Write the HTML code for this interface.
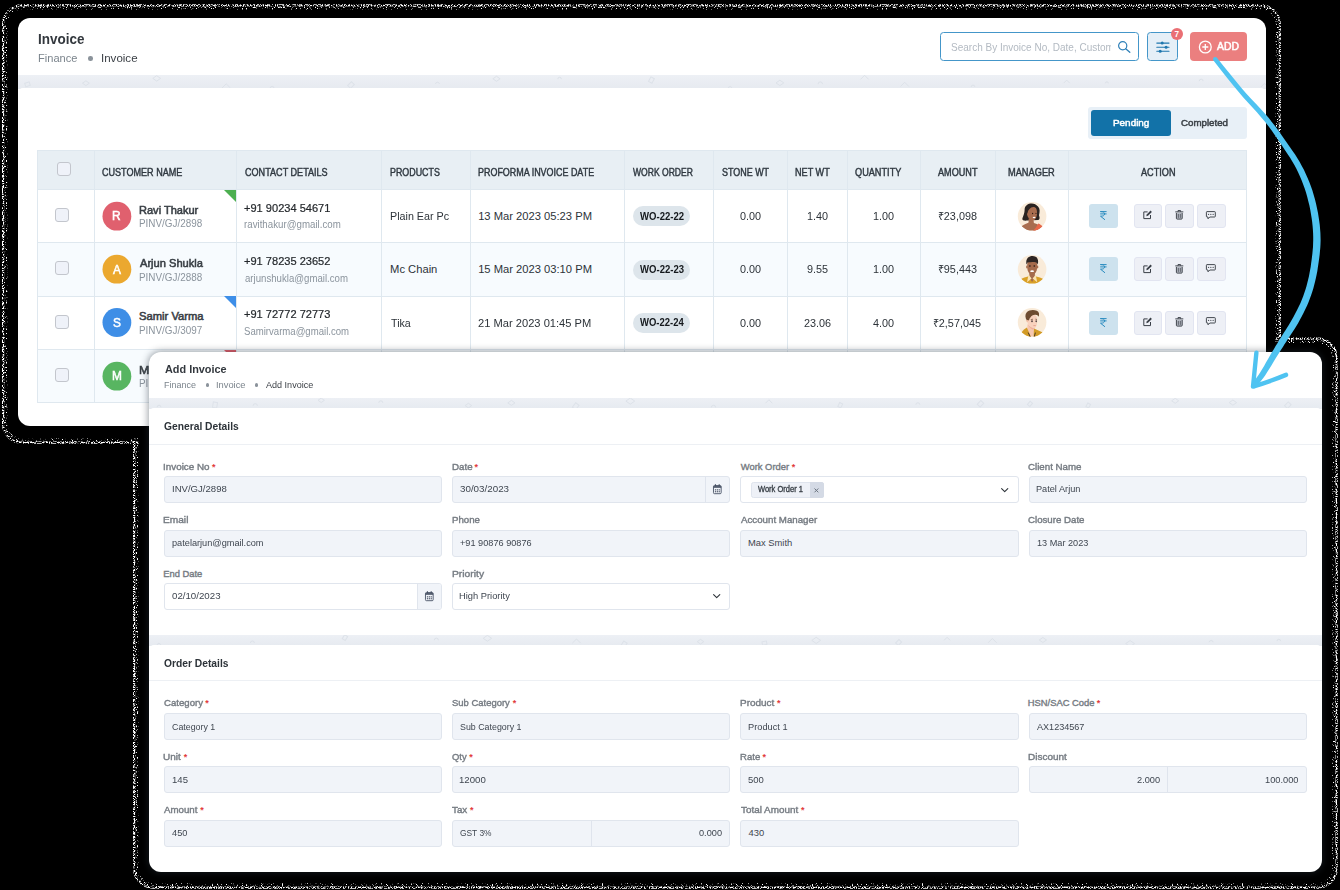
<!DOCTYPE html>
<html>
<head>
<meta charset="utf-8">
<title>Invoice</title>
<style>
*{box-sizing:border-box;margin:0;padding:0}
html,body{width:1340px;height:890px;overflow:hidden;background:#000}
body{position:relative;font-family:"Liberation Sans",sans-serif;color:#2d3339}
.abs{position:absolute}
.t{position:absolute;white-space:nowrap;line-height:1;transform-origin:0 0}
svg{position:absolute;overflow:visible}
#card1{position:absolute;left:18px;top:18px;width:1248px;height:408px;background:#fff;border-radius:12px}
#card2{position:absolute;left:149px;top:352px;width:1173px;height:520px;background:#fff;border-radius:12px;box-shadow:0 0 7px 1px rgba(40,50,60,.45)}
.strip{position:absolute;background:linear-gradient(#edf0f5,#e6eaf0);overflow:hidden}
.hl{position:absolute;left:37px;width:1210px;height:1px;background:#dfe8ef}
.vl{position:absolute;top:150px;width:1px;height:253px;background:#dfe8ef}
.cb{position:absolute;width:14px;height:14px;border:1px solid #c3c6cd;border-radius:3px;background:#eff2f9}
.av{position:absolute;width:29px;height:29px;border-radius:50%}
.wo{position:absolute;left:633px;width:57px;height:20px;border-radius:10px;background:#dde5eb}
.rb{position:absolute;left:1089px;width:29px;height:24px;border-radius:3px;background:#cde2ee}
.ab{position:absolute;width:29px;height:24px;border-radius:3px;background:#eef0f6;border:1px solid #e2e5f1}
.in{position:absolute;width:278px;height:27px;border:1px solid #e0e5ed;border-radius:3px;background:#f1f4f9}
.in.w{background:#fff}
.sep{position:absolute;width:1px;height:25px;background:#dfe4ed}
</style>
</head>
<body>
<svg style="left:0;top:0" width="1340" height="890" viewBox="0 0 1340 890"><defs><filter id="dz" x="0" y="0" width="100%" height="100%" filterUnits="userSpaceOnUse"><feTurbulence type="fractalNoise" baseFrequency="0.85" numOctaves="1" seed="7" result="n"/><feColorMatrix in="n" type="matrix" values="0 0 0 0 1  0 0 0 0 1  0 0 0 0 1  0 0 0 9 -4.05" result="m"/><feComposite in="m" in2="SourceGraphic" operator="in"/></filter><filter id="dz2" x="0" y="0" width="100%" height="100%" filterUnits="userSpaceOnUse"><feTurbulence type="fractalNoise" baseFrequency="0.8" numOctaves="1" seed="3" result="n"/><feColorMatrix in="n" type="matrix" values="0 0 0 0 1  0 0 0 0 1  0 0 0 0 1  0 0 0 9 -5.35" result="m"/><feComposite in="m" in2="SourceGraphic" operator="in"/></filter></defs><g filter="url(#dz)" fill="none" stroke="#fff" stroke-width="2.2"><rect x="3.1" y="5.3" width="1276.7" height="437.4" rx="19" ry="19" /><rect x="134.1" y="338.7" width="1202.5" height="548.9" rx="19" ry="19" /></g><g filter="url(#dz2)" fill="none" stroke="#fff" stroke-width="3.4"><rect x="5.7" y="7.9" width="1271.5" height="432.2" rx="17" ry="17" /><rect x="136.7" y="341.3" width="1197.3" height="543.7" rx="17" ry="17" /></g><rect x="7.7" y="9.9" width="1267.5" height="428.2" rx="15" ry="15" fill="#000"/><rect x="138.7" y="343.3" width="1193.3" height="539.7" rx="15" ry="15" fill="#000"/></svg><div id="card1"></div>
<div class="t" style="left:37.66px;top:33px;font-size:13.8px;color:#33383e;font-weight:bold;transform:scaleX(0.9753);">Invoice</div>
<div class="t" style="left:37.59px;top:53px;font-size:11px;color:#7b848c;transform:scaleX(1.0062);">Finance</div>
<div class="abs" style="left:88.2px;top:56.2px;width:4.5px;height:4.5px;border-radius:50%;background:#8b939b"></div>
<div class="t" style="left:100.55px;top:53px;font-size:11px;color:#3a3f45;transform:scaleX(1.0484);">Invoice</div>
<div class="strip" style="left:18px;top:75px;width:1248px;height:14px"><svg width="1248" height="14" style="left:0;top:0" fill="none" stroke="#dde2e9" stroke-width="1"><rect x="8.2" y="7.3" width="3.6" height="4.7" transform="rotate(70 10.0 9.1)"/><path d="M67.9 5.8l3.4 2.4l-3.4 2.4l-3.4 -2.4z"/><path d="M138.7 0.7l3.9 2.7l-3.9 2.7l-3.9 -2.7z"/><path d="M203.8 13.2l4.4 -4.4l4.4 4.4"/><path d="M252.1 13.4a2.0 2.0 0 0 1 4.0 0"/><rect x="331.4" y="7.6" width="4.1" height="5.3" transform="rotate(45 333.5 9.6)"/><path d="M417.4 8.9a2.1 2.1 0 0 1 4.1 0"/><path d="M478.5 1.3l3.6 2.5l-3.6 2.5l-3.6 -2.5z"/><path d="M539.8 4.1a1.8 1.8 0 0 1 3.6 0"/><rect x="631.8" y="2.6" width="3.9" height="5.1" transform="rotate(29 633.7 4.5)"/><path d="M710.3 13.3a1.7 1.7 0 0 1 3.5 0"/><path d="M761.9 5.2l3.9 2.7l-3.9 2.7l-3.9 -2.7z"/><path d="M800.1 9.1a2.2 2.2 0 0 1 4.4 0"/><path d="M842.5 4.4l4.1 -4.1l4.1 4.1"/><path d="M882.5 11.5l4.2 -4.2l4.2 4.2"/><path d="M953.2 11.9a1.8 1.8 0 0 1 3.6 0"/><path d="M1045.7 8.1l3.0 -3.0l3.0 3.0"/><path d="M1087.4 8.3a1.5 1.5 0 0 1 3.0 0"/><path d="M1181.3 6.1a1.9 1.9 0 0 1 3.8 0"/><path d="M1242.9 12.0l3.6 -3.6l3.6 3.6"/></svg></div>
<div class="abs" style="left:18px;top:69px;width:1248px;height:6px;background:#fff;border-radius:0 0 5px 5px"></div>
<div class="abs" style="left:18px;top:88px;width:1248px;height:8px;background:#fff;border-radius:5px 5px 0 0"></div>
<div class="abs" style="left:940px;top:32px;width:199px;height:29px;border:1px solid #4496c9;border-radius:3.5px;background:#fff"></div>
<div class="abs" style="left:0;top:30px;width:1111.4px;height:32px;overflow:hidden"><div class="t" style="left:950.77px;top:12px;font-size:10.5px;color:#b3bac2;transform:scaleX(0.9530);">Search By Invoice No, Date, Customer</div></div>
<svg style="left:1116px;top:39px" width="16" height="16" viewBox="0 0 16 16"><circle cx="6.7" cy="6.7" r="4.1" fill="none" stroke="#2f80b8" stroke-width="1.2"/><path d="M9.7 9.7L13.8 13.3" stroke="#2f80b8" stroke-width="1.3" stroke-linecap="round"/></svg>
<div class="abs" style="left:1147px;top:32px;width:31px;height:29px;border:1px solid #4496c9;border-radius:3.5px;background:#e5eff7"></div>
<svg style="left:1156px;top:40px" width="14" height="14" viewBox="0 0 14 14"><g stroke="#1f77ae" stroke-width="1.1" stroke-linecap="round"><path d="M0.8 3.1H13M0.8 7.2H13M0.8 11.3H13"/></g><g fill="#1f77ae"><circle cx="6.2" cy="3.1" r="1.5"/><circle cx="10.1" cy="7.2" r="1.5"/><circle cx="4.2" cy="11.3" r="1.5"/></g></svg>
<div class="abs" style="left:1170.6px;top:27.8px;width:12.6px;height:12.6px;border-radius:50%;background:#ea6f74"></div>
<div class="t" style="left:1174.62px;top:31px;font-size:8.2px;color:#fff;font-weight:bold;">7</div>
<div class="abs" style="left:1190px;top:32px;width:57px;height:29px;border-radius:4px;background:#eb7f7f"></div>
<svg style="left:1198px;top:40px" width="14" height="14" viewBox="0 0 14 14"><circle cx="7.3" cy="7" r="5.9" fill="none" stroke="#fff" stroke-width="1.3"/><path d="M7.3 4V10M4.3 7H10.3" stroke="#fff" stroke-width="1.3"/></svg>
<div class="t" style="left:1217.20px;top:42px;font-size:10.2px;color:#fff;-webkit-text-stroke:0.51px #fff;transform:scaleX(1.0204);">ADD</div>
<div class="abs" style="left:1088px;top:107px;width:159px;height:32px;border-radius:3px;background:#e8f0f7"></div>
<div class="abs" style="left:1091px;top:110px;width:80px;height:26px;border-radius:3px;background:#1272a8"></div>
<div class="t" style="left:1113.13px;top:118px;font-size:9.6px;color:#fff;-webkit-text-stroke:0.48px #fff;transform:scaleX(1.0327);">Pending</div>
<div class="t" style="left:1180.94px;top:118px;font-size:9.6px;color:#3a4046;-webkit-text-stroke:0.48px #3a4046;transform:scaleX(1.0135);">Completed</div>
<div class="abs" style="left:37px;top:150px;width:1210px;height:39px;background:#e8eff4"></div>
<div class="abs" style="left:37px;top:243px;width:1210px;height:53px;background:#f7fbfe"></div>
<div class="abs" style="left:37px;top:350px;width:1210px;height:52px;background:#f7fbfe"></div>
<div class="hl" style="top:150px"></div>
<div class="hl" style="top:189px"></div>
<div class="hl" style="top:242px"></div>
<div class="hl" style="top:296px"></div>
<div class="hl" style="top:349px"></div>
<div class="hl" style="top:402px"></div>
<div class="vl" style="left:37px"></div>
<div class="vl" style="left:94px"></div>
<div class="vl" style="left:236px"></div>
<div class="vl" style="left:381px"></div>
<div class="vl" style="left:470px"></div>
<div class="vl" style="left:624px"></div>
<div class="vl" style="left:713px"></div>
<div class="vl" style="left:787px"></div>
<div class="vl" style="left:847px"></div>
<div class="vl" style="left:920px"></div>
<div class="vl" style="left:995px"></div>
<div class="vl" style="left:1068px"></div>
<div class="vl" style="left:1246px"></div>
<div class="cb" style="left:57px;top:162px"></div>
<div class="t" style="left:102.05px;top:168px;font-size:10px;color:#2f3840;-webkit-text-stroke:0.42px #2f3840;transform:scaleX(0.9056);">CUSTOMER NAME</div>
<div class="t" style="left:244.55px;top:168px;font-size:10px;color:#2f3840;-webkit-text-stroke:0.42px #2f3840;transform:scaleX(0.9072);">CONTACT DETAILS</div>
<div class="t" style="left:389.79px;top:168px;font-size:10px;color:#2f3840;-webkit-text-stroke:0.42px #2f3840;transform:scaleX(0.8881);">PRODUCTS</div>
<div class="t" style="left:478.28px;top:168px;font-size:10px;color:#2f3840;-webkit-text-stroke:0.42px #2f3840;transform:scaleX(0.8942);">PROFORMA INVOICE DATE</div>
<div class="t" style="left:633.00px;top:168px;font-size:10px;color:#2f3840;-webkit-text-stroke:0.42px #2f3840;transform:scaleX(0.8552);">WORK ORDER</div>
<div class="t" style="left:721.60px;top:168px;font-size:10px;color:#2f3840;-webkit-text-stroke:0.42px #2f3840;transform:scaleX(0.8954);">STONE WT</div>
<div class="t" style="left:795.27px;top:168px;font-size:10px;color:#2f3840;-webkit-text-stroke:0.42px #2f3840;transform:scaleX(0.9111);">NET WT</div>
<div class="t" style="left:855.09px;top:168px;font-size:10px;color:#2f3840;-webkit-text-stroke:0.42px #2f3840;transform:scaleX(0.9171);">QUANTITY</div>
<div class="t" style="left:937.75px;top:168px;font-size:10px;color:#2f3840;-webkit-text-stroke:0.42px #2f3840;transform:scaleX(0.9102);">AMOUNT</div>
<div class="t" style="left:1008.06px;top:168px;font-size:10px;color:#2f3840;-webkit-text-stroke:0.42px #2f3840;transform:scaleX(0.9242);">MANAGER</div>
<div class="t" style="left:1140.60px;top:168px;font-size:10px;color:#2f3840;-webkit-text-stroke:0.42px #2f3840;transform:scaleX(0.9133);">ACTION</div>
<div class="cb" style="left:55px;top:208.0px"></div>
<div class="abs" style="left:224px;top:189.6px;width:0;height:0;border-top:12px solid #4caf50;border-left:12px solid transparent"></div>
<svg style="left:0;top:0" width="200" height="420"><circle cx="116.9" cy="216.2" r="14.4" fill="#e0606e"/></svg>
<div class="t" style="left:112.11px;top:210px;font-size:12.5px;color:#fff;-webkit-text-stroke:0.53px #fff;transform:scaleX(0.9500);">R</div>
<div class="t" style="left:138.71px;top:205px;font-size:11.2px;color:#3a4046;-webkit-text-stroke:0.56px #3a4046;transform:scaleX(0.9866);">Ravi Thakur</div>
<div class="t" style="left:138.51px;top:219px;font-size:10px;color:#8b949d;transform:scaleX(0.9887);">PINV/GJ/2898</div>
<div class="t" style="left:244.21px;top:203px;font-size:11.2px;color:#24282c;-webkit-text-stroke:0.20px #24282c;transform:scaleX(0.9886);">+91 90234 54671</div>
<div class="t" style="left:244.27px;top:220px;font-size:10px;color:#8b949d;transform:scaleX(0.9711);">ravithakur@gmail.com</div>
<div class="t" style="left:390.14px;top:211px;font-size:11.2px;color:#2d3339;transform:scaleX(0.9590);">Plain Ear Pc</div>
<div class="t" style="left:478.15px;top:211px;font-size:11.2px;color:#2d3339;">13 Mar 2023 05:23 PM</div>
<div class="wo" style="top:206.2px"></div>
<div class="t" style="left:639.92px;top:212px;font-size:10px;color:#15191d;font-weight:bold;transform:scaleX(0.9560);">WO-22-22</div>
<div class="t" style="left:739.84px;top:211px;font-size:11.2px;color:#2d3339;transform:scaleX(0.9700);">0.00</div>
<div class="t" style="left:806.72px;top:211px;font-size:11.2px;color:#2d3339;transform:scaleX(0.9700);">1.40</div>
<div class="t" style="left:872.82px;top:211px;font-size:11.2px;color:#2d3339;transform:scaleX(0.9700);">1.00</div>
<div class="t" style="left:937.50px;top:211px;font-size:11.2px;color:#2d3339;transform:scaleX(0.9700);">₹23,098</div>
<svg style="left:1012px;top:196.0px" width="40" height="40" viewBox="0 0 40 40"><defs><clipPath id="cw"><circle cx="20.1" cy="20.3" r="14.3"/></clipPath></defs><circle cx="20.1" cy="20.3" r="14.3" fill="#f9ebd9"/><g clip-path="url(#cw)"><path d="M10.4 22.3C9.8 24.6 12.5 25 15.5 24.6L26.2 24C28.2 23.2 27.6 21 27 19.2C27.8 16 28.2 13 26.2 10.8C24 8 21 7 18.3 7.6C14.8 8.2 12.6 10.6 12.6 14C12.6 17.2 11.2 20 10.4 22.3Z" fill="#2a2321"/><path d="M16.6 22.5L21.6 24.6L21.9 27C25 28 27.5 29.2 30.5 31C27 35 23 35.4 20 35.2C16 35 12.4 33.4 9.6 30.2C12 28.2 15 27.6 16.6 26.4Z" fill="#a96d4f"/><path d="M26.2 27.4C28.2 28 29.8 29.4 30.8 30.8C28 34 24.6 35.2 20.6 35.2C23 32.6 25 30.2 26.2 27.4Z" fill="#e8684a"/><path d="M15 15.4C15 11.8 18 10.4 21 10.6C24.2 10.8 25.2 14 25 17.6C24.9 20.6 23.8 23.8 21.2 24.6C18 24.8 15.6 21.2 15 18.2Z" fill="#a96d4f"/><path d="M14 17.4C13.6 12 16 8.6 20 8.6C24 8.6 26.6 10.6 26.6 14.2C25.2 12 23.4 10.8 21.2 11.1C18.4 11.5 16 13.6 15.4 17.4Z" fill="#2a2321"/><circle cx="20.6" cy="17.5" r=".65" fill="#2a1a14"/><circle cx="24" cy="17.3" r=".6" fill="#2a1a14"/><ellipse cx="22.1" cy="21.5" rx="1.4" ry=".7" fill="#fff"/></g></svg>
<div class="rb" style="top:204.0px"></div><svg style="left:1100.2px;top:210.8px" width="8" height="10" viewBox="0 0 8 10"><path d="M0.2 0.6H6.6M0.2 2.9H6.6M0.5 0.6C3.3 0.6 4.6 1.4 4.6 2.9C4.6 4.5 3.2 5.2 0.5 5.2L5 8.8" fill="none" stroke="#2b8cc0" stroke-width="1" stroke-linejoin="round"/></svg><div class="ab" style="left:1133.7px;top:204.0px;width:28.4px"></div><div class="ab" style="left:1165.3px;top:204.0px;width:28.4px"></div><div class="ab" style="left:1197.2px;top:204.0px;width:28.6px"></div><svg style="left:1143px;top:210.3px" width="10" height="10" viewBox="0 0 10 10"><path d="M4.6 1.9H0.8V8.6H7.5V5" fill="none" stroke="#3a3f47" stroke-width="1"/><path d="M3.3 6.2L3.7 4.5L7.6 0.6L8.9 1.9L5 5.8Z" fill="#3a3f47"/></svg><svg style="left:1175.3px;top:210.3px" width="9" height="10" viewBox="0 0 9 10"><path d="M0.3 1.9H8.3M3 1.7V0.6H5.6V1.7" fill="none" stroke="#3a3f47" stroke-width="1"/><path d="M1.4 3V8.3Q1.4 9.1 2.2 9.1H6.4Q7.2 9.1 7.2 8.3V3" fill="#b9bdc7" stroke="#3a3f47" stroke-width=".95"/><path d="M3.3 3.9V7.9M5.3 3.9V7.9" stroke="#3a3f47" stroke-width=".75"/></svg><svg style="left:1206.4px;top:210.6px" width="10" height="9" viewBox="0 0 10 9"><path d="M1 0.6H8.6Q9.3 0.6 9.3 1.3V5.3Q9.3 6 8.6 6H3.8L2 7.8V6H1Q0.4 6 0.4 5.3V1.3Q0.4 0.6 1 0.6Z" fill="none" stroke="#3a3f47" stroke-width=".95" stroke-linejoin="round"/><g fill="#3a3f47"><circle cx="2.55" cy="3.3" r=".66"/><circle cx="4.85" cy="3.3" r=".66"/><circle cx="7.15" cy="3.3" r=".66"/></g></svg>
<div class="cb" style="left:55px;top:261.3px"></div>
<svg style="left:0;top:0" width="200" height="420"><circle cx="116.9" cy="269.2" r="14.4" fill="#eba82f"/></svg>
<div class="t" style="left:112.63px;top:264px;font-size:12.5px;color:#fff;-webkit-text-stroke:0.53px #fff;transform:scaleX(0.9500);">A</div>
<div class="t" style="left:139.60px;top:258px;font-size:11.2px;color:#3a4046;-webkit-text-stroke:0.56px #3a4046;transform:scaleX(0.9917);">Arjun Shukla</div>
<div class="t" style="left:138.51px;top:273px;font-size:10px;color:#8b949d;transform:scaleX(0.9887);">PINV/GJ/2888</div>
<div class="t" style="left:244.21px;top:256px;font-size:11.2px;color:#24282c;-webkit-text-stroke:0.20px #24282c;transform:scaleX(0.9886);">+91 78235 23652</div>
<div class="t" style="left:244.51px;top:274px;font-size:10px;color:#8b949d;transform:scaleX(0.9638);">arjunshukla@gmail.com</div>
<div class="t" style="left:390.10px;top:264px;font-size:11.2px;color:#2d3339;">Mc Chain</div>
<div class="t" style="left:478.15px;top:264px;font-size:11.2px;color:#2d3339;">15 Mar 2023 03:10 PM</div>
<div class="wo" style="top:259.5px"></div>
<div class="t" style="left:639.92px;top:265px;font-size:10px;color:#15191d;font-weight:bold;transform:scaleX(0.9560);">WO-22-23</div>
<div class="t" style="left:739.84px;top:264px;font-size:11.2px;color:#2d3339;transform:scaleX(0.9700);">0.00</div>
<div class="t" style="left:806.89px;top:264px;font-size:11.2px;color:#2d3339;transform:scaleX(0.9700);">9.55</div>
<div class="t" style="left:872.82px;top:264px;font-size:11.2px;color:#2d3339;transform:scaleX(0.9700);">1.00</div>
<div class="t" style="left:937.50px;top:264px;font-size:11.2px;color:#2d3339;transform:scaleX(0.9700);">₹95,443</div>
<svg style="left:1012px;top:249.1px" width="40" height="40" viewBox="0 0 40 40"><defs><clipPath id="cm1"><circle cx="20.1" cy="20.3" r="14.3"/></clipPath></defs><circle cx="20.1" cy="20.3" r="14.3" fill="#f9ebd9"/><g clip-path="url(#cm1)"><path d="M9 30C11 28.6 13.6 27.8 16 27.4L24.2 27.4C26.6 27.8 29.2 28.6 31.4 30L31 36H9Z" fill="#d9a027"/><path d="M17.4 23.5H22.8L23 28.5L20.1 33L17.2 28.5Z" fill="#a56b4c"/><path d="M16.6 25.2L15 33.2L19.6 29.6L17.6 27Z" fill="#fbe3b0"/><path d="M23.6 25.2L25.2 33.2L20.6 29.6L22.6 27Z" fill="#fbe3b0"/><path d="M15.2 16C15.2 12 17.4 11.4 20.2 11.4C23 11.4 25.2 12 25.2 16C25.6 20 24.4 23.4 22.4 25C21 26 19.4 26 18 25C16 23.4 14.8 20 15.2 16Z" fill="#a56b4c"/><ellipse cx="14.9" cy="18" rx=".8" ry="1.4" fill="#a56b4c"/><ellipse cx="25.5" cy="18" rx=".8" ry="1.4" fill="#a56b4c"/><path d="M14.6 15.6C13.6 11.4 15 8.4 18 7.4C21 6.6 24.6 7.2 25.6 10C26.4 12 26.2 14 25.6 15.6C25.2 13.6 24 12.8 22 12.9C19.6 13 17 13 15.6 13.4Z" fill="#2d2523"/><ellipse cx="17.9" cy="17" rx=".9" ry=".7" fill="#2a1a14"/><ellipse cx="22.3" cy="17" rx=".9" ry=".7" fill="#2a1a14"/><ellipse cx="20.1" cy="22.2" rx="1.9" ry=".85" fill="#fff"/></g></svg>
<div class="rb" style="top:257.3px"></div><svg style="left:1100.2px;top:264.1px" width="8" height="10" viewBox="0 0 8 10"><path d="M0.2 0.6H6.6M0.2 2.9H6.6M0.5 0.6C3.3 0.6 4.6 1.4 4.6 2.9C4.6 4.5 3.2 5.2 0.5 5.2L5 8.8" fill="none" stroke="#2b8cc0" stroke-width="1" stroke-linejoin="round"/></svg><div class="ab" style="left:1133.7px;top:257.3px;width:28.4px"></div><div class="ab" style="left:1165.3px;top:257.3px;width:28.4px"></div><div class="ab" style="left:1197.2px;top:257.3px;width:28.6px"></div><svg style="left:1143px;top:263.6px" width="10" height="10" viewBox="0 0 10 10"><path d="M4.6 1.9H0.8V8.6H7.5V5" fill="none" stroke="#3a3f47" stroke-width="1"/><path d="M3.3 6.2L3.7 4.5L7.6 0.6L8.9 1.9L5 5.8Z" fill="#3a3f47"/></svg><svg style="left:1175.3px;top:263.6px" width="9" height="10" viewBox="0 0 9 10"><path d="M0.3 1.9H8.3M3 1.7V0.6H5.6V1.7" fill="none" stroke="#3a3f47" stroke-width="1"/><path d="M1.4 3V8.3Q1.4 9.1 2.2 9.1H6.4Q7.2 9.1 7.2 8.3V3" fill="#b9bdc7" stroke="#3a3f47" stroke-width=".95"/><path d="M3.3 3.9V7.9M5.3 3.9V7.9" stroke="#3a3f47" stroke-width=".75"/></svg><svg style="left:1206.4px;top:263.90000000000003px" width="10" height="9" viewBox="0 0 10 9"><path d="M1 0.6H8.6Q9.3 0.6 9.3 1.3V5.3Q9.3 6 8.6 6H3.8L2 7.8V6H1Q0.4 6 0.4 5.3V1.3Q0.4 0.6 1 0.6Z" fill="none" stroke="#3a3f47" stroke-width=".95" stroke-linejoin="round"/><g fill="#3a3f47"><circle cx="2.55" cy="3.3" r=".66"/><circle cx="4.85" cy="3.3" r=".66"/><circle cx="7.15" cy="3.3" r=".66"/></g></svg>
<div class="cb" style="left:55px;top:314.7px"></div>
<div class="abs" style="left:224px;top:296.3px;width:0;height:0;border-top:12px solid #3d8ee8;border-left:12px solid transparent"></div>
<svg style="left:0;top:0" width="200" height="420"><circle cx="116.9" cy="322.5" r="14.4" fill="#3e8ee6"/></svg>
<div class="t" style="left:112.63px;top:317px;font-size:12.5px;color:#fff;-webkit-text-stroke:0.53px #fff;transform:scaleX(0.9500);">S</div>
<div class="t" style="left:139.10px;top:311px;font-size:11.2px;color:#3a4046;-webkit-text-stroke:0.56px #3a4046;">Samir Varma</div>
<div class="t" style="left:138.51px;top:326px;font-size:10px;color:#8b949d;transform:scaleX(0.9895);">PINV/GJ/3097</div>
<div class="t" style="left:244.21px;top:309px;font-size:11.2px;color:#24282c;-webkit-text-stroke:0.20px #24282c;transform:scaleX(0.9881);">+91 72772 72773</div>
<div class="t" style="left:244.47px;top:327px;font-size:10px;color:#8b949d;transform:scaleX(0.9582);">Samirvarma@gmail.com</div>
<div class="t" style="left:390.76px;top:318px;font-size:11.2px;color:#2d3339;transform:scaleX(0.9554);">Tika</div>
<div class="t" style="left:478.45px;top:318px;font-size:11.2px;color:#2d3339;transform:scaleX(0.9955);">21 Mar 2023 01:45 PM</div>
<div class="wo" style="top:312.9px"></div>
<div class="t" style="left:639.92px;top:318px;font-size:10px;color:#15191d;font-weight:bold;transform:scaleX(0.9488);">WO-22-24</div>
<div class="t" style="left:739.84px;top:318px;font-size:11.2px;color:#2d3339;transform:scaleX(0.9700);">0.00</div>
<div class="t" style="left:803.87px;top:318px;font-size:11.2px;color:#2d3339;transform:scaleX(0.9700);">23.06</div>
<div class="t" style="left:873.11px;top:318px;font-size:11.2px;color:#2d3339;transform:scaleX(0.9700);">4.00</div>
<div class="t" style="left:932.95px;top:318px;font-size:11.2px;color:#2d3339;transform:scaleX(0.9700);">₹2,57,045</div>
<svg style="left:1012px;top:302.2px" width="40" height="40" viewBox="0 0 40 40"><defs><clipPath id="cm2"><circle cx="20.1" cy="20.3" r="14.3"/></clipPath></defs><circle cx="20.1" cy="20.3" r="14.3" fill="#f9ebd9"/><g clip-path="url(#cm2)"><path d="M15.6 22L21.6 26L22 29L21.2 35.5H17.4L15 28Z" fill="#f6c7b0"/><path d="M9.4 30.6C11 28.4 13 26.6 14.8 25.6L19.4 35.8H9.6Z" fill="#d39b25"/><path d="M22 26.4C25 27.8 28 29 30.8 30.6L30 36H21.4Z" fill="#d39b25"/><path d="M16.2 30.6L18.6 35.6M23.4 30.6L22 35.6" stroke="#4a3a2a" stroke-width="1"/><path d="M14.9 17C14.8 13.4 17.4 12.4 20.6 12.6C24 12.8 25.5 15 25.3 18.6C25.3 21.6 24.6 24.8 23 26C21 26.8 18.4 25.8 16.8 23.6C15.6 21.8 14.9 19 14.9 17Z" fill="#f9d2bd"/><path d="M16.2 22.6C17.6 25 20.4 26.8 23 26C22.6 27.4 21.4 27.8 20 27.2C18 26.4 16.6 24.4 16.2 22.6Z" fill="#eeb19b"/><ellipse cx="15.3" cy="18.6" rx="1" ry="1.6" fill="#f3c0a8"/><path d="M15 18.4C13 16 12.8 12.4 14.8 10.2C16.8 7.8 21.8 7.2 24.8 8.8C27.2 10 27.6 12.4 26.6 14.8C26 13.4 24.8 12.4 23 12.7C20.8 12.9 19.4 13.8 18.6 15.2C17.6 16.2 17.2 17.2 17 18.6C16.4 17.8 15.6 17.6 15 18.4Z" fill="#6e4c30"/><path d="M18.8 17.6L21 17.2M23.4 17.2L25 17.5" stroke="#5a3c28" stroke-width=".6"/><ellipse cx="20" cy="19.2" rx=".85" ry=".95" fill="#4a3a3a"/><ellipse cx="24.2" cy="19.2" rx=".75" ry=".95" fill="#4a3a3a"/><path d="M21.4 23.6H23.8" stroke="#e08f80" stroke-width=".7"/></g></svg>
<div class="rb" style="top:310.7px"></div><svg style="left:1100.2px;top:317.5px" width="8" height="10" viewBox="0 0 8 10"><path d="M0.2 0.6H6.6M0.2 2.9H6.6M0.5 0.6C3.3 0.6 4.6 1.4 4.6 2.9C4.6 4.5 3.2 5.2 0.5 5.2L5 8.8" fill="none" stroke="#2b8cc0" stroke-width="1" stroke-linejoin="round"/></svg><div class="ab" style="left:1133.7px;top:310.7px;width:28.4px"></div><div class="ab" style="left:1165.3px;top:310.7px;width:28.4px"></div><div class="ab" style="left:1197.2px;top:310.7px;width:28.6px"></div><svg style="left:1143px;top:317.0px" width="10" height="10" viewBox="0 0 10 10"><path d="M4.6 1.9H0.8V8.6H7.5V5" fill="none" stroke="#3a3f47" stroke-width="1"/><path d="M3.3 6.2L3.7 4.5L7.6 0.6L8.9 1.9L5 5.8Z" fill="#3a3f47"/></svg><svg style="left:1175.3px;top:317.0px" width="9" height="10" viewBox="0 0 9 10"><path d="M0.3 1.9H8.3M3 1.7V0.6H5.6V1.7" fill="none" stroke="#3a3f47" stroke-width="1"/><path d="M1.4 3V8.3Q1.4 9.1 2.2 9.1H6.4Q7.2 9.1 7.2 8.3V3" fill="#b9bdc7" stroke="#3a3f47" stroke-width=".95"/><path d="M3.3 3.9V7.9M5.3 3.9V7.9" stroke="#3a3f47" stroke-width=".75"/></svg><svg style="left:1206.4px;top:317.3px" width="10" height="9" viewBox="0 0 10 9"><path d="M1 0.6H8.6Q9.3 0.6 9.3 1.3V5.3Q9.3 6 8.6 6H3.8L2 7.8V6H1Q0.4 6 0.4 5.3V1.3Q0.4 0.6 1 0.6Z" fill="none" stroke="#3a3f47" stroke-width=".95" stroke-linejoin="round"/><g fill="#3a3f47"><circle cx="2.55" cy="3.3" r=".66"/><circle cx="4.85" cy="3.3" r=".66"/><circle cx="7.15" cy="3.3" r=".66"/></g></svg>
<div class="cb" style="left:55px;top:368.0px"></div>
<div class="abs" style="left:224px;top:349.6px;width:0;height:0;border-top:12px solid #e05a67;border-left:12px solid transparent"></div>
<svg style="left:0;top:0" width="200" height="420"><circle cx="116.9" cy="376.2" r="14.4" fill="#58b561"/></svg>
<div class="t" style="left:111.66px;top:370px;font-size:12.5px;color:#fff;-webkit-text-stroke:0.53px #fff;transform:scaleX(0.9500);">M</div>
<div class="t" style="left:138.61px;top:365px;font-size:11.2px;color:#3a4046;-webkit-text-stroke:0.56px #3a4046;transform:scaleX(1.1032);">Mohit Patel</div>
<div class="t" style="left:138.51px;top:379px;font-size:10px;color:#8b949d;transform:scaleX(0.9895);">PINV/GJ/3101</div>
<div class="t" style="left:244.20px;top:363px;font-size:11.2px;color:#24282c;-webkit-text-stroke:0.20px #24282c;">+91 98250 11223</div>
<div class="t" style="left:244.25px;top:380px;font-size:10px;color:#8b949d;transform:scaleX(0.9943);">mohitpatel@gmail.com</div><div id="card2"></div>
<div class="t" style="left:164.76px;top:364px;font-size:11.3px;color:#33383e;font-weight:bold;transform:scaleX(0.9620);">Add Invoice</div>
<div class="t" style="left:164.28px;top:380px;font-size:9.4px;color:#7b848c;transform:scaleX(0.9593);">Finance</div>
<div class="abs" style="left:205.7px;top:383.2px;width:3.6px;height:3.6px;border-radius:50%;background:#8b939b"></div>
<div class="t" style="left:216.05px;top:380px;font-size:9.4px;color:#7b848c;transform:scaleX(0.9945);">Invoice</div>
<div class="abs" style="left:254.7px;top:383.2px;width:3.6px;height:3.6px;border-radius:50%;background:#8b939b"></div>
<div class="t" style="left:265.70px;top:380px;font-size:9.4px;color:#3a3f45;transform:scaleX(0.9642);">Add Invoice</div>
<div class="strip" style="left:149px;top:398px;width:1173px;height:11px"><svg width="1173" height="11" style="left:0;top:0" fill="none" stroke="#dde2e9" stroke-width="1"><path d="M8.2 9.1a1.8 1.8 0 0 1 3.7 0"/><rect x="64.0" y="4.2" width="4.2" height="5.5" transform="rotate(9 66.1 6.3)"/><path d="M104.1 7.8a2.1 2.1 0 0 1 4.3 0"/><path d="M172.2 0.1l3.2 2.2l-3.2 2.2l-3.2 -2.2z"/><path d="M229.8 4.8a2.0 2.0 0 0 1 4.0 0"/><path d="M319.4 5.3l3.3 2.3l-3.3 2.3l-3.3 -2.3z"/><path d="M362.4 2.4l3.6 2.5l-3.6 2.5l-3.6 -2.5z"/><rect x="425.0" y="5.6" width="4.2" height="5.5" transform="rotate(38 427.1 7.7)"/><path d="M481.3 -0.0l4.4 3.1l-4.4 3.1l-4.4 -3.1z"/><path d="M562.3 9.5a2.2 2.2 0 0 1 4.4 0"/><path d="M616.5 5.2l3.4 -3.4l3.4 3.4"/><rect x="689.8" y="5.0" width="3.3" height="4.4" transform="rotate(26 691.4 6.7)"/><path d="M766.9 6.7a1.9 1.9 0 0 1 3.9 0"/><rect x="829.9" y="3.3" width="4.0" height="5.2" transform="rotate(44 831.9 5.3)"/><rect x="879.7" y="3.9" width="3.2" height="4.2" transform="rotate(40 881.3 5.5)"/><rect x="937.9" y="5.5" width="3.1" height="4.0" transform="rotate(29 939.4 7.0)"/><path d="M1026.2 0.3l3.5 2.5l-3.5 2.5l-3.5 -2.5z"/><path d="M1083.9 2.0l3.7 2.6l-3.7 2.6l-3.7 -2.6z"/><rect x="1137.3" y="4.7" width="4.0" height="5.3" transform="rotate(44 1139.3 6.7)"/></svg></div>
<div class="abs" style="left:149px;top:392px;width:1173px;height:6px;background:#fff;border-radius:0 0 5px 5px"></div>
<div class="abs" style="left:149px;top:408px;width:1173px;height:8px;background:#fff;border-radius:5px 5px 0 0"></div>
<div class="t" style="left:163.92px;top:421px;font-size:10.8px;color:#2d3339;font-weight:bold;transform:scaleX(0.9508);">General Details</div>
<div class="abs" style="left:149px;top:444px;width:1173px;height:1px;background:#edf0f4"></div>
<div class="t" style="left:163.11px;top:462px;font-size:9.4px;color:#767c83;-webkit-text-stroke:0.39px #767c83;transform:scaleX(1.0513);">Invoice No</div><div class="t" style="left:212.10px;top:463px;font-size:9px;color:#e23b3b;font-weight:bold;">*</div><div class="in" style="left:164px;top:476px"></div><div class="t" style="left:171.63px;top:484px;font-size:9.4px;color:#3f4650;transform:scaleX(1.0211);">INV/GJ/2898</div>
<div class="t" style="left:451.62px;top:462px;font-size:9.4px;color:#767c83;-webkit-text-stroke:0.39px #767c83;transform:scaleX(1.0412);">Date</div><div class="t" style="left:474.50px;top:463px;font-size:9px;color:#e23b3b;font-weight:bold;">*</div><div class="in" style="left:452px;top:476px"></div><div class="t" style="left:459.83px;top:484px;font-size:9.4px;color:#3f4650;transform:scaleX(1.0449);">30/03/2023</div>
<div class="sep" style="left:705px;top:477px"></div><svg style="left:713px;top:484px" width="9.4" height="10.4" viewBox="0 0 10 11"><path d="M2.6 0.2V2.4M6.6 0.2V2.4" stroke="#465063" stroke-width="1.2"/><path d="M1.6 1.6H7.6Q8.7 1.6 8.7 2.7V9.2Q8.7 10.3 7.6 10.3H1.6Q0.5 10.3 0.5 9.2V2.7Q0.5 1.6 1.6 1.6Z" fill="none" stroke="#465063" stroke-width=".95"/><path d="M0.5 2.2H8.7V4H0.5Z" fill="#465063"/><g fill="#465063"><rect x="2" y="5.6" width="1.3" height="1.2"/><rect x="4" y="5.6" width="1.3" height="1.2"/><rect x="6" y="5.6" width="1.3" height="1.2"/><rect x="2" y="7.6" width="1.3" height="1.2"/><rect x="4" y="7.6" width="1.3" height="1.2"/><rect x="6" y="7.6" width="1.3" height="1.2"/></g></svg>
<div class="t" style="left:740.80px;top:462px;font-size:9.4px;color:#767c83;-webkit-text-stroke:0.39px #767c83;">Work Order</div><div class="t" style="left:791.70px;top:463px;font-size:9px;color:#e23b3b;font-weight:bold;">*</div><div class="in w" style="left:740px;top:476px;width:279px"></div>
<div class="abs" style="left:751px;top:481.5px;width:73px;height:16.5px;border-radius:2.5px;background:#eef1f7;border:1px solid #dfe4ed"></div>
<div class="abs" style="left:809.6px;top:481.5px;width:14.4px;height:16.5px;border-radius:0 2.5px 2.5px 0;background:#d4dae5"></div>
<div class="t" style="left:758.10px;top:485px;font-size:8.4px;color:#3b4249;-webkit-text-stroke:0.35px #3b4249;transform:scaleX(0.8961);">Work Order 1</div>
<svg style="left:814px;top:487.7px" width="5" height="5" viewBox="0 0 5 5"><path d="M0.5 0.5L4.3 4.3M4.3 0.5L0.5 4.3" stroke="#6b7480" stroke-width="1"/></svg>
<svg style="left:1001px;top:488px" width="8" height="5" viewBox="0 0 8 5"><path d="M0.6 0.6L3.7 3.6L6.8 0.6" fill="none" stroke="#2d3339" stroke-width="1.1" stroke-linecap="round" stroke-linejoin="round"/></svg>
<div class="t" style="left:1028.03px;top:462px;font-size:9.4px;color:#767c83;-webkit-text-stroke:0.39px #767c83;transform:scaleX(1.0375);">Client Name</div><div class="in" style="left:1029px;top:476px"></div><div class="t" style="left:1036.47px;top:484px;font-size:9.4px;color:#3f4650;transform:scaleX(0.9787);">Patel Arjun</div>
<div class="t" style="left:163.19px;top:515px;font-size:9.4px;color:#767c83;-webkit-text-stroke:0.39px #767c83;transform:scaleX(1.0827);">Email</div><div class="in" style="left:164px;top:530px"></div><div class="t" style="left:171.91px;top:538px;font-size:9.4px;color:#3f4650;transform:scaleX(0.9797);">patelarjun@gmail.com</div>
<div class="t" style="left:451.63px;top:515px;font-size:9.4px;color:#767c83;-webkit-text-stroke:0.39px #767c83;transform:scaleX(1.0325);">Phone</div><div class="in" style="left:452px;top:530px"></div><div class="t" style="left:459.76px;top:538px;font-size:9.4px;color:#3f4650;transform:scaleX(0.9777);">+91 90876 90876</div>
<div class="t" style="left:740.80px;top:515px;font-size:9.4px;color:#767c83;-webkit-text-stroke:0.39px #767c83;transform:scaleX(1.0361);">Account Manager</div><div class="in" style="left:740px;top:530px;width:279px"></div><div class="t" style="left:747.95px;top:538px;font-size:9.4px;color:#3f4650;">Max Smith</div>
<div class="t" style="left:1028.04px;top:515px;font-size:9.4px;color:#767c83;-webkit-text-stroke:0.39px #767c83;transform:scaleX(1.0328);">Closure Date</div><div class="in" style="left:1029px;top:530px"></div><div class="t" style="left:1036.52px;top:538px;font-size:9.4px;color:#3f4650;transform:scaleX(0.9748);">13 Mar 2023</div>
<div class="t" style="left:163.25px;top:569px;font-size:9.4px;color:#767c83;-webkit-text-stroke:0.39px #767c83;">End Date</div><div class="in w" style="left:164px;top:583px"></div><div class="t" style="left:172.14px;top:591px;font-size:9.4px;color:#3f4650;transform:scaleX(1.0342);">02/10/2023</div>
<div class="abs" style="left:417px;top:584px;width:24px;height:25px;background:#f1f4f9;border-left:1px solid #e0e5ed;border-radius:0 2px 2px 0"></div><svg style="left:425px;top:591px" width="9.4" height="10.4" viewBox="0 0 10 11"><path d="M2.6 0.2V2.4M6.6 0.2V2.4" stroke="#465063" stroke-width="1.2"/><path d="M1.6 1.6H7.6Q8.7 1.6 8.7 2.7V9.2Q8.7 10.3 7.6 10.3H1.6Q0.5 10.3 0.5 9.2V2.7Q0.5 1.6 1.6 1.6Z" fill="none" stroke="#465063" stroke-width=".95"/><path d="M0.5 2.2H8.7V4H0.5Z" fill="#465063"/><g fill="#465063"><rect x="2" y="5.6" width="1.3" height="1.2"/><rect x="4" y="5.6" width="1.3" height="1.2"/><rect x="6" y="5.6" width="1.3" height="1.2"/><rect x="2" y="7.6" width="1.3" height="1.2"/><rect x="4" y="7.6" width="1.3" height="1.2"/><rect x="6" y="7.6" width="1.3" height="1.2"/></g></svg>
<div class="t" style="left:451.58px;top:569px;font-size:9.4px;color:#767c83;-webkit-text-stroke:0.39px #767c83;transform:scaleX(1.0984);">Priority</div><div class="in w" style="left:452px;top:583px"></div><div class="t" style="left:459.45px;top:591px;font-size:9.4px;color:#3f4650;transform:scaleX(0.9952);">High Priority</div>
<svg style="left:713px;top:594px" width="8" height="5" viewBox="0 0 8 5"><path d="M0.6 0.6L3.7 3.6L6.8 0.6" fill="none" stroke="#2d3339" stroke-width="1.1" stroke-linecap="round" stroke-linejoin="round"/></svg>
<div class="strip" style="left:149px;top:635px;width:1173px;height:11px"><svg width="1173" height="11" style="left:0;top:0" fill="none" stroke="#dde2e9" stroke-width="1"><path d="M8.2 9.8a1.8 1.8 0 0 1 3.5 0"/><path d="M101.4 8.0a2.0 2.0 0 0 1 4.0 0"/><rect x="194.5" y="0.4" width="3.5" height="4.6" transform="rotate(32 196.3 2.1)"/><path d="M285.3 5.2a2.0 2.0 0 0 1 4.1 0"/><path d="M338.4 0.4l4.2 2.9l-4.2 2.9l-4.2 -2.9z"/><path d="M423.3 8.2l4.2 -4.2l4.2 4.2"/><rect x="473.4" y="6.8" width="4.0" height="5.1" transform="rotate(32 475.4 8.8)"/><path d="M551.5 4.4l3.3 2.3l-3.3 2.3l-3.3 -2.3z"/><rect x="614.2" y="6.2" width="3.5" height="4.5" transform="rotate(80 615.9 8.0)"/><path d="M667.2 2.3l4.4 3.1l-4.4 3.1l-4.4 -3.1z"/><rect x="748.1" y="5.3" width="3.7" height="4.8" transform="rotate(44 750.0 7.2)"/><path d="M795.1 5.3l3.0 -3.0l3.0 3.0"/><path d="M839.1 7.8l4.3 -4.3l4.3 4.3"/><path d="M893.9 2.5l3.6 2.5l-3.6 2.5l-3.6 -2.5z"/><path d="M981.1 5.6l4.4 3.0l-4.4 3.0l-4.4 -3.0z"/><path d="M1060.1 7.2a2.1 2.1 0 0 1 4.1 0"/><path d="M1128.0 6.1a1.8 1.8 0 0 1 3.6 0"/></svg></div>
<div class="abs" style="left:149px;top:629px;width:1173px;height:6px;background:#fff;border-radius:0 0 5px 5px"></div>
<div class="abs" style="left:149px;top:645px;width:1173px;height:8px;background:#fff;border-radius:5px 5px 0 0"></div>
<div class="t" style="left:163.72px;top:658px;font-size:10.8px;color:#2d3339;font-weight:bold;transform:scaleX(0.9505);">Order Details</div>
<div class="abs" style="left:149px;top:680px;width:1173px;height:1px;background:#edf0f4"></div>
<div class="t" style="left:163.54px;top:698px;font-size:9.4px;color:#767c83;-webkit-text-stroke:0.39px #767c83;transform:scaleX(1.0268);">Category</div><div class="t" style="left:205.30px;top:699px;font-size:9px;color:#e23b3b;font-weight:bold;">*</div><div class="in" style="left:164px;top:713px"></div><div class="t" style="left:172.08px;top:722px;font-size:9.4px;color:#3f4650;transform:scaleX(0.9423);">Category 1</div>
<div class="t" style="left:452.00px;top:698px;font-size:9.4px;color:#767c83;-webkit-text-stroke:0.39px #767c83;transform:scaleX(1.0074);">Sub Category</div><div class="t" style="left:512.80px;top:699px;font-size:9px;color:#e23b3b;font-weight:bold;">*</div><div class="in" style="left:452px;top:713px"></div><div class="t" style="left:459.82px;top:722px;font-size:9.4px;color:#3f4650;transform:scaleX(0.9443);">Sub Category 1</div>
<div class="t" style="left:740.00px;top:698px;font-size:9.4px;color:#767c83;-webkit-text-stroke:0.39px #767c83;transform:scaleX(1.0638);">Product</div><div class="t" style="left:776.90px;top:699px;font-size:9px;color:#e23b3b;font-weight:bold;">*</div><div class="in" style="left:740px;top:713px;width:279px"></div><div class="t" style="left:747.96px;top:722px;font-size:9.4px;color:#3f4650;transform:scaleX(0.9857);">Product 1</div>
<div class="t" style="left:1027.75px;top:698px;font-size:9.4px;color:#767c83;-webkit-text-stroke:0.39px #767c83;">HSN/SAC Code</div><div class="t" style="left:1096.80px;top:699px;font-size:9px;color:#e23b3b;font-weight:bold;">*</div><div class="in" style="left:1029px;top:713px"></div><div class="t" style="left:1037.20px;top:722px;font-size:9.4px;color:#3f4650;transform:scaleX(0.9670);">AX1234567</div>
<div class="t" style="left:163.25px;top:752px;font-size:9.4px;color:#767c83;-webkit-text-stroke:0.39px #767c83;transform:scaleX(1.0655);">Unit</div><div class="t" style="left:183.80px;top:753px;font-size:9px;color:#e23b3b;font-weight:bold;">*</div><div class="in" style="left:164px;top:766px"></div><div class="t" style="left:171.79px;top:775px;font-size:9.4px;color:#3f4650;transform:scaleX(1.0202);">145</div>
<div class="t" style="left:452.00px;top:752px;font-size:9.4px;color:#767c83;-webkit-text-stroke:0.39px #767c83;transform:scaleX(1.0054);">Qty</div><div class="t" style="left:469.20px;top:753px;font-size:9px;color:#e23b3b;font-weight:bold;">*</div><div class="in" style="left:452px;top:766px"></div><div class="t" style="left:459.48px;top:775px;font-size:9.4px;color:#3f4650;transform:scaleX(1.0274);">12000</div>
<div class="t" style="left:740.04px;top:752px;font-size:9.4px;color:#767c83;-webkit-text-stroke:0.39px #767c83;transform:scaleX(1.0199);">Rate</div><div class="t" style="left:762.50px;top:753px;font-size:9px;color:#e23b3b;font-weight:bold;">*</div><div class="in" style="left:740px;top:766px;width:279px"></div><div class="t" style="left:748.35px;top:775px;font-size:9.4px;color:#3f4650;transform:scaleX(1.0130);">500</div>
<div class="t" style="left:1027.70px;top:752px;font-size:9.4px;color:#767c83;-webkit-text-stroke:0.39px #767c83;transform:scaleX(1.0654);">Discount</div><div class="in" style="left:1029px;top:766px"></div>
<div class="sep" style="left:1167px;top:767px"></div>
<div class="t" style="left:1136.66px;top:775px;font-size:9.4px;color:#3f4650;transform:scaleX(0.9848);">2.000</div>
<div class="t" style="left:1265.11px;top:775px;font-size:9.4px;color:#3f4650;transform:scaleX(0.9863);">100.000</div>
<div class="t" style="left:164.00px;top:805px;font-size:9.4px;color:#767c83;-webkit-text-stroke:0.39px #767c83;transform:scaleX(1.0361);">Amount</div><div class="t" style="left:200.30px;top:806px;font-size:9px;color:#e23b3b;font-weight:bold;">*</div><div class="in" style="left:164px;top:820px"></div><div class="t" style="left:172.30px;top:828px;font-size:9.4px;color:#3f4650;transform:scaleX(0.9831);">450</div>
<div class="t" style="left:452.19px;top:805px;font-size:9.4px;color:#767c83;-webkit-text-stroke:0.39px #767c83;transform:scaleX(1.0469);">Tax</div><div class="t" style="left:470.00px;top:806px;font-size:9px;color:#e23b3b;font-weight:bold;">*</div><div class="in" style="left:452px;top:820px"></div><div class="t" style="left:459.80px;top:828px;font-size:9.4px;color:#3f4650;transform:scaleX(0.8946);">GST 3%</div>
<div class="sep" style="left:591px;top:821px"></div>
<div class="t" style="left:698.76px;top:828px;font-size:9.4px;color:#3f4650;transform:scaleX(0.9805);">0.000</div>
<div class="t" style="left:740.59px;top:805px;font-size:9.4px;color:#767c83;-webkit-text-stroke:0.39px #767c83;transform:scaleX(1.0549);">Total Amount</div><div class="t" style="left:801.00px;top:806px;font-size:9px;color:#e23b3b;font-weight:bold;">*</div><div class="in" style="left:740px;top:820px;width:279px"></div><div class="t" style="left:748.50px;top:828px;font-size:9.4px;color:#3f4650;">430</div><svg style="left:0;top:0" width="1340" height="890" viewBox="0 0 1340 890"><path d="M1213.5 60.5L1216.2 63.9L1219.9 68.7L1224.4 74.4L1229.2 80.5L1234.1 86.5L1238.7 92.1L1243.1 97.2L1247.7 102.2L1252.3 107.2L1256.7 112.1L1260.9 116.9L1264.8 121.5L1268.3 125.9L1271.5 130.2L1274.4 134.4L1277.3 138.5L1280.0 142.6L1282.6 146.6L1285.2 150.5L1287.7 154.2L1290.1 157.8L1292.3 161.4L1294.4 165.0L1296.4 168.7L1298.2 172.6L1300.0 176.5L1301.7 180.4L1303.2 184.4L1304.7 188.5L1306.0 192.6L1307.2 196.8L1308.3 201.2L1309.4 205.6L1310.3 210.0L1311.0 214.3L1311.7 218.4L1312.2 222.3L1312.6 226.1L1312.9 229.7L1313.1 233.2L1313.2 236.7L1313.2 240.2L1313.1 243.6L1313.0 246.9L1312.7 250.1L1312.4 253.4L1312.0 256.7L1311.6 260.0L1311.1 263.4L1310.7 266.7L1310.1 270.0L1309.5 273.3L1308.9 276.6L1308.1 279.8L1307.3 283.1L1306.4 286.4L1305.4 289.7L1304.3 293.0L1303.2 296.3L1301.9 299.6L1300.5 302.9L1298.9 306.3L1297.2 309.7L1295.5 313.1L1293.7 316.4L1292.0 319.5L1290.4 322.3L1288.8 325.0L1287.2 327.6L1285.5 330.2L1283.8 332.8L1282.1 335.5L1280.5 338.2L1278.9 340.8L1277.3 343.4L1275.6 346.1L1274.0 348.9L1272.2 351.8L1270.3 355.1L1268.2 358.7L1266.1 362.3L1264.1 365.9L1262.1 369.2L1260.3 372.2L1258.5 374.9L1256.7 377.6L1255.0 380.0L1253.4 382.2L1252.1 384.0L1251.1 385.4L1254.9 388.4L1256.0 387.1L1257.4 385.3L1259.2 383.2L1261.1 380.8L1263.1 378.2L1265.1 375.4L1267.1 372.3L1269.2 369.0L1271.4 365.4L1273.6 361.8L1275.7 358.3L1277.6 355.2L1279.5 352.3L1281.2 349.5L1282.9 346.9L1284.5 344.3L1286.2 341.7L1287.9 339.1L1289.6 336.5L1291.2 334.0L1292.9 331.4L1294.7 328.7L1296.4 325.9L1298.2 322.9L1299.9 319.7L1301.7 316.4L1303.5 312.9L1305.3 309.3L1307.0 305.8L1308.5 302.2L1309.8 298.8L1311.1 295.3L1312.2 291.9L1313.3 288.4L1314.2 285.0L1315.1 281.6L1315.9 278.1L1316.6 274.7L1317.3 271.2L1317.8 267.8L1318.3 264.4L1318.8 261.0L1319.3 257.6L1319.7 254.2L1320.0 250.8L1320.3 247.4L1320.5 243.8L1320.6 240.2L1320.5 236.6L1320.4 232.9L1320.1 229.2L1319.8 225.3L1319.3 221.4L1318.7 217.4L1318.0 213.1L1317.1 208.7L1316.1 204.1L1315.0 199.5L1313.7 195.0L1312.4 190.6L1310.9 186.3L1309.3 182.1L1307.6 178.0L1305.8 173.9L1303.9 169.8L1301.8 165.9L1299.7 162.0L1297.4 158.2L1295.1 154.6L1292.6 150.9L1290.0 147.2L1287.4 143.4L1284.6 139.4L1281.8 135.4L1278.9 131.3L1275.8 127.0L1272.4 122.7L1268.8 118.1L1264.8 113.5L1260.5 108.7L1255.9 103.8L1251.3 98.9L1246.7 93.9L1242.3 88.9L1237.8 83.5L1232.9 77.6L1228.0 71.5L1223.5 65.9L1219.7 61.2L1216.9 57.7Z" fill="#4fc3f1"/><circle cx="1215.2" cy="59.1" r="2.2" fill="#4fc3f1"/><path d="M1256.4 352.6Q1254.5 372 1253 386.6Q1270 381.5 1286 374.9" fill="none" stroke="#4fc3f1" stroke-width="4.4" stroke-linecap="round" stroke-linejoin="round"/></svg>
</body>
</html>
